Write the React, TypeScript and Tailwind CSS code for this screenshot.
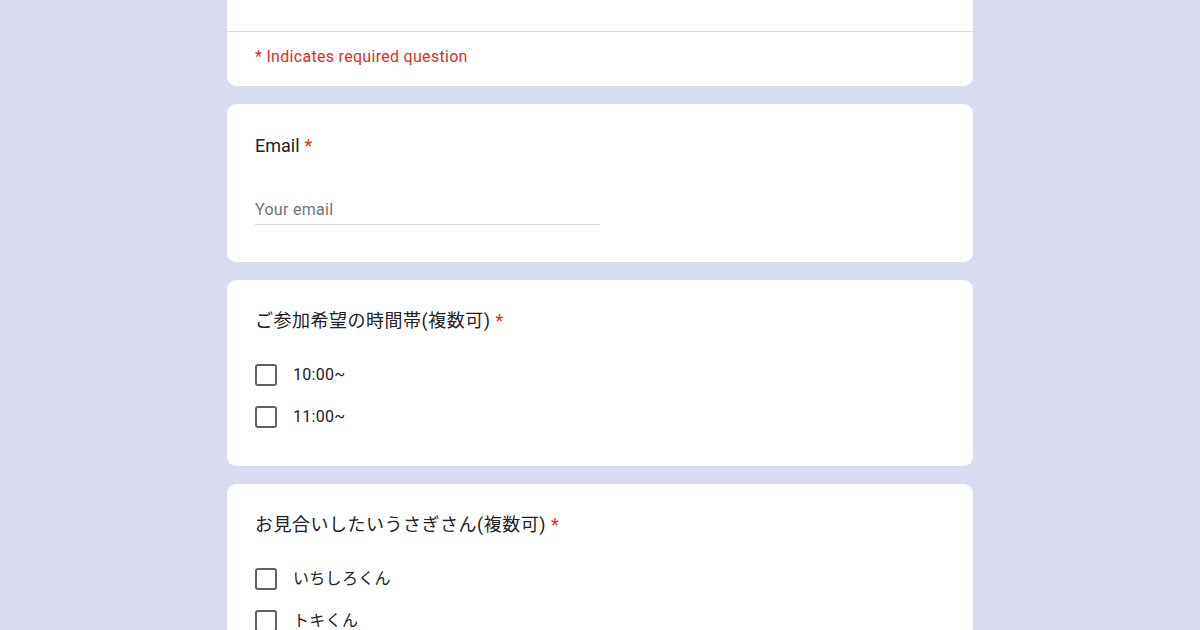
const font = { fontFamily: 'Roboto, "Noto Sans CJK JP", "Noto Sans", sans-serif' };

function Required() {
  return <span className="ml-[5px] text-[#d93025]">*</span>;
}

function Checkbox({ label }: { label: string }) {
  return (
    <div className="flex h-[42px] items-center">
      <span className="h-[22px] w-[22px] rounded-[3px] border-2 border-[#5f6368]" />
      <span className="ml-[16px] text-[16px] leading-[22px] tracking-[0.3px] text-[#202124]">{label}</span>
    </div>
  );
}

function CheckboxQuestion({ title, options }: { title: string; options: string[] }) {
  return (
    <div className="shrink-0 rounded-[9px] bg-white px-[28px] pb-[28px] pt-[27px]">
      <div className="text-[18px] leading-[27px] tracking-[0.5px] text-[#202124]">
        {title}
        <Required />
      </div>
      <div className="mt-[20px]">
        {options.map((o) => (
          <Checkbox key={o} label={o} />
        ))}
      </div>
    </div>
  );
}

export default function App() {
  return (
    <div style={font} className="flex h-[630px] w-full items-start justify-center overflow-hidden bg-[#d9dbf1]">
      <div className="flex w-[746px] flex-col gap-[18px]">
        <div className="shrink-0 rounded-b-[9px] bg-white">
          <div className="h-[32px] border-b border-[#dadce0]" />
          <div className="h-[54px] px-[28px] pt-[14px] text-[16px] leading-[22px] tracking-[0.3px] text-[#d93025]">
            * Indicates required question
          </div>
        </div>

        <div className="h-[158px] shrink-0 rounded-[9px] bg-white px-[28px] pt-[28px]">
          <div className="text-[18px] leading-[27px] text-[#202124]">
            Email
            <Required />
          </div>
          <div className="mt-[40px] w-[345px] border-b border-[#dadce0] pb-[3px] text-[16px] leading-[22px] tracking-[0.3px] text-[#70757a]">
            Your email
          </div>
        </div>

        <CheckboxQuestion title="ご参加希望の時間帯(複数可)" options={['10:00~', '11:00~']} />
        <CheckboxQuestion title="お見合いしたいうさぎさん(複数可)" options={['いちしろくん', 'トキくん']} />
      </div>
    </div>
  );
}
